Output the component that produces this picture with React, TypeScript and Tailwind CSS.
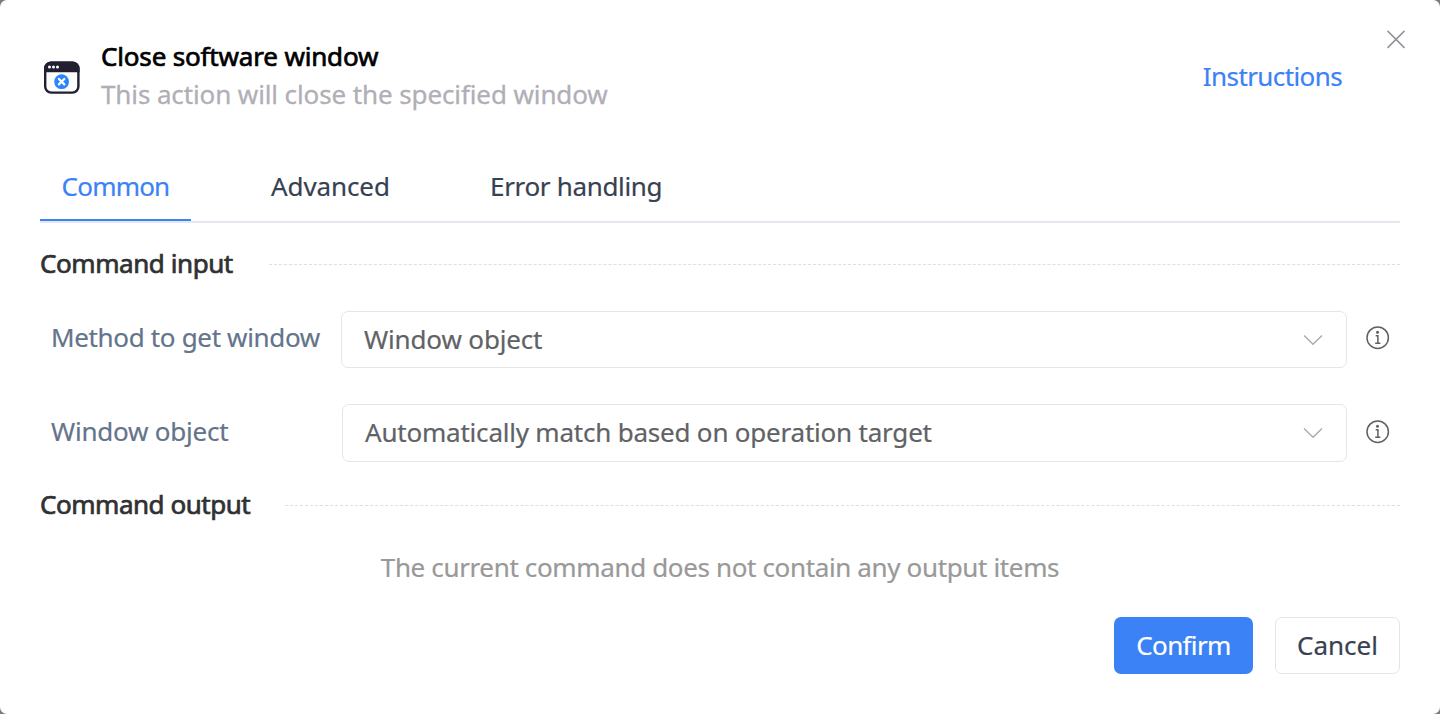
import type { ReactNode } from "react";

function WindowIcon() {
  return (
    <svg width="36" height="34" viewBox="0 0 36 34" className="shrink-0">
      <rect x="1.200" y="2.600" width="33.200" height="30" rx="6" fill="#fff" stroke="#211f30" strokeWidth="2.400" />
      <path d="M0 12.300V8.400A7 7 0 0 1 7 1.400h21.600A7 7 0 0 1 35.600 8.400v3.900z" fill="#211f30" />
      <g fill="#fff">
        <circle cx="5.500" cy="7" r="1.500" />
        <circle cx="9.500" cy="7" r="1.500" />
        <circle cx="13.500" cy="7" r="1.500" />
      </g>
      <circle cx="17.600" cy="21.700" r="7.400" fill="#2b85ff" />
      <path d="M14.900 19l5.400 5.400M20.300 19l-5.400 5.400" stroke="#fff" strokeWidth="2.200" strokeLinecap="round" />
    </svg>
  );
}

function InfoIcon() {
  return (
    <svg width="24" height="24" viewBox="0 0 24 24" fill="none" stroke="#5f6064" strokeWidth="1.500">
      <circle cx="11.700" cy="11.700" r="10.700" />
      <circle cx="11.500" cy="6.200" r="1.500" fill="#5f6064" stroke="none" />
      <path d="M9.700 9.700h2.200v7.200M9.200 17.200h5.200" />
    </svg>
  );
}

function Section({ title, className }: { title: string; className: string }) {
  return (
    <div className="flex h-[38px] items-center text-[26px] whitespace-nowrap text-[#303133] [-webkit-text-stroke:0.7px_#303133]">
      <h2 className={`-mt-[3px] ${className}`}>{title}</h2>
      <i className="h-px flex-1 border-t border-dashed border-[#dcdfe6]" />
    </div>
  );
}

function Select({ children, className }: { children: ReactNode; className: string }) {
  return (
    <button className={`flex items-center justify-between rounded-[7px] border border-[#e4e5e7] pr-[23px] pl-[22px] text-[26px] whitespace-nowrap text-[#606266] [-webkit-text-stroke:0.2px_#606266] ${className}`}>
      {children}
      <svg width="20" height="12" viewBox="0 0 20 12" fill="none" stroke="#a8abb2" strokeWidth="1.400" className="mt-px">
        <path d="M1 1.500l9 8.700 9-8.700" />
      </svg>
    </button>
  );
}

export default function App() {
  return (
    <div className="h-[714px] w-[1440px] overflow-hidden bg-[#7b7b7b] font-['Noto_Sans',sans-serif] leading-9">
      <main className="flex h-full flex-col rounded-[7px] bg-white px-10">
        <header className="flex h-[124px] shrink-0 pt-[38px]">
          <div className="pt-[22px] pl-1">
            <WindowIcon />
          </div>
          <div className="ml-[21px] flex flex-col text-[26px] whitespace-nowrap">
            <h1 className="h-[38px]">
              <span className="tracking-[-0.17px] text-black [-webkit-text-stroke:0.7px_#000]">Close software window</span>
            </h1>
            <p>
              <span className="tracking-[-0.11px] text-[#b0afb6] [-webkit-text-stroke:0.3px_#b0afb6]">This action will close the specified window</span>
            </p>
          </div>
          <a className="mt-5 ml-auto text-[26px] tracking-[-0.6px] text-[#3b82f6] [-webkit-text-stroke:0.2px_#3b82f6]">
            <span>Instructions</span>
          </a>
          <button className="-mt-[9px] -mr-[6px] ml-[44px] flex size-5 items-center">
            <svg width="20" height="20" viewBox="0 0 20 20" stroke="#909399" strokeWidth="1.500">
              <path d="M1.500 1.900l17 17M18.500 1.900l-17 17" />
            </svg>
          </button>
        </header>
        <nav className="mt-[26px] flex h-[73px] shrink-0 border-b-2 border-[#e4e7ed] text-[26px] whitespace-nowrap text-[#374151] [-webkit-text-stroke:0.2px]">
          <div className="flex h-[71px] w-[151px] justify-center border-b-2 border-[#3b82f6] pt-[18px] text-[#3b82f6]">
            <span className="tracking-[-0.8px]">Common</span>
          </div>
          <div className="ml-20 w-[119px] pt-[18px]">
            <span className="tracking-[-0.1px]">Advanced</span>
          </div>
          <div className="ml-[100px] pt-[18px]">
            <span className="tracking-[-0.33px]">Error handling</span>
          </div>
        </nav>
        <section className="pt-[22px]">
          <Section title="Command input" className="w-[229px] tracking-[-0.43px]" />
          <div className="mt-7 flex h-[57px] text-[26px] whitespace-nowrap">
            <label className="w-[301px] pt-[8px] pl-[11px] text-[#64748b] [-webkit-text-stroke:0.2px_#64748b]">
              <span className="tracking-[-0.34px]">Method to get window</span>
            </label>
            <Select className="h-[57px] w-[1006px] pb-px">
              <span className="tracking-[-0.15px]">Window object</span>
            </Select>
            <div className="mt-[15px] ml-[19px]">
              <InfoIcon />
            </div>
          </div>
          <div className="mt-9 flex h-[58px] text-[26px] whitespace-nowrap">
            <label className="w-[302px] pt-[9px] pl-[11px] text-[#64748b] [-webkit-text-stroke:0.2px_#64748b]">
              <span className="tracking-[-0.22px]">Window object</span>
            </label>
            <Select className="h-[58px] w-[1005px] pb-0.5">
              <span className="tracking-[-0.21px]">Automatically match based on operation target</span>
            </Select>
            <div className="mt-[16px] ml-[19px]">
              <InfoIcon />
            </div>
          </div>
        </section>
        <section className="pt-6">
          <Section title="Command output" className="w-[245px] tracking-[-0.47px]" />
          <p className="mt-[25px] text-center text-[26px] whitespace-nowrap text-[#999] [-webkit-text-stroke:0.2px_#999]">
            <span className="tracking-[-0.36px]">The current command does not contain any output items</span>
          </p>
        </section>
        <footer className="mt-[32px] flex justify-end gap-[22px] text-[26px] whitespace-nowrap [-webkit-text-stroke:0.2px]">
          <button className="flex h-[57px] w-[139px] items-center justify-center rounded-[7px] bg-[#3b82f6] pb-0.5 text-white">
            <span className="tracking-[-0.65px]">Confirm</span>
          </button>
          <button className="flex h-[57px] w-[125px] items-center justify-center rounded-[7px] border border-[#e4e5e7] pb-0.5 text-[#374151]">
            <span>Cancel</span>
          </button>
        </footer>
      </main>
    </div>
  );
}
